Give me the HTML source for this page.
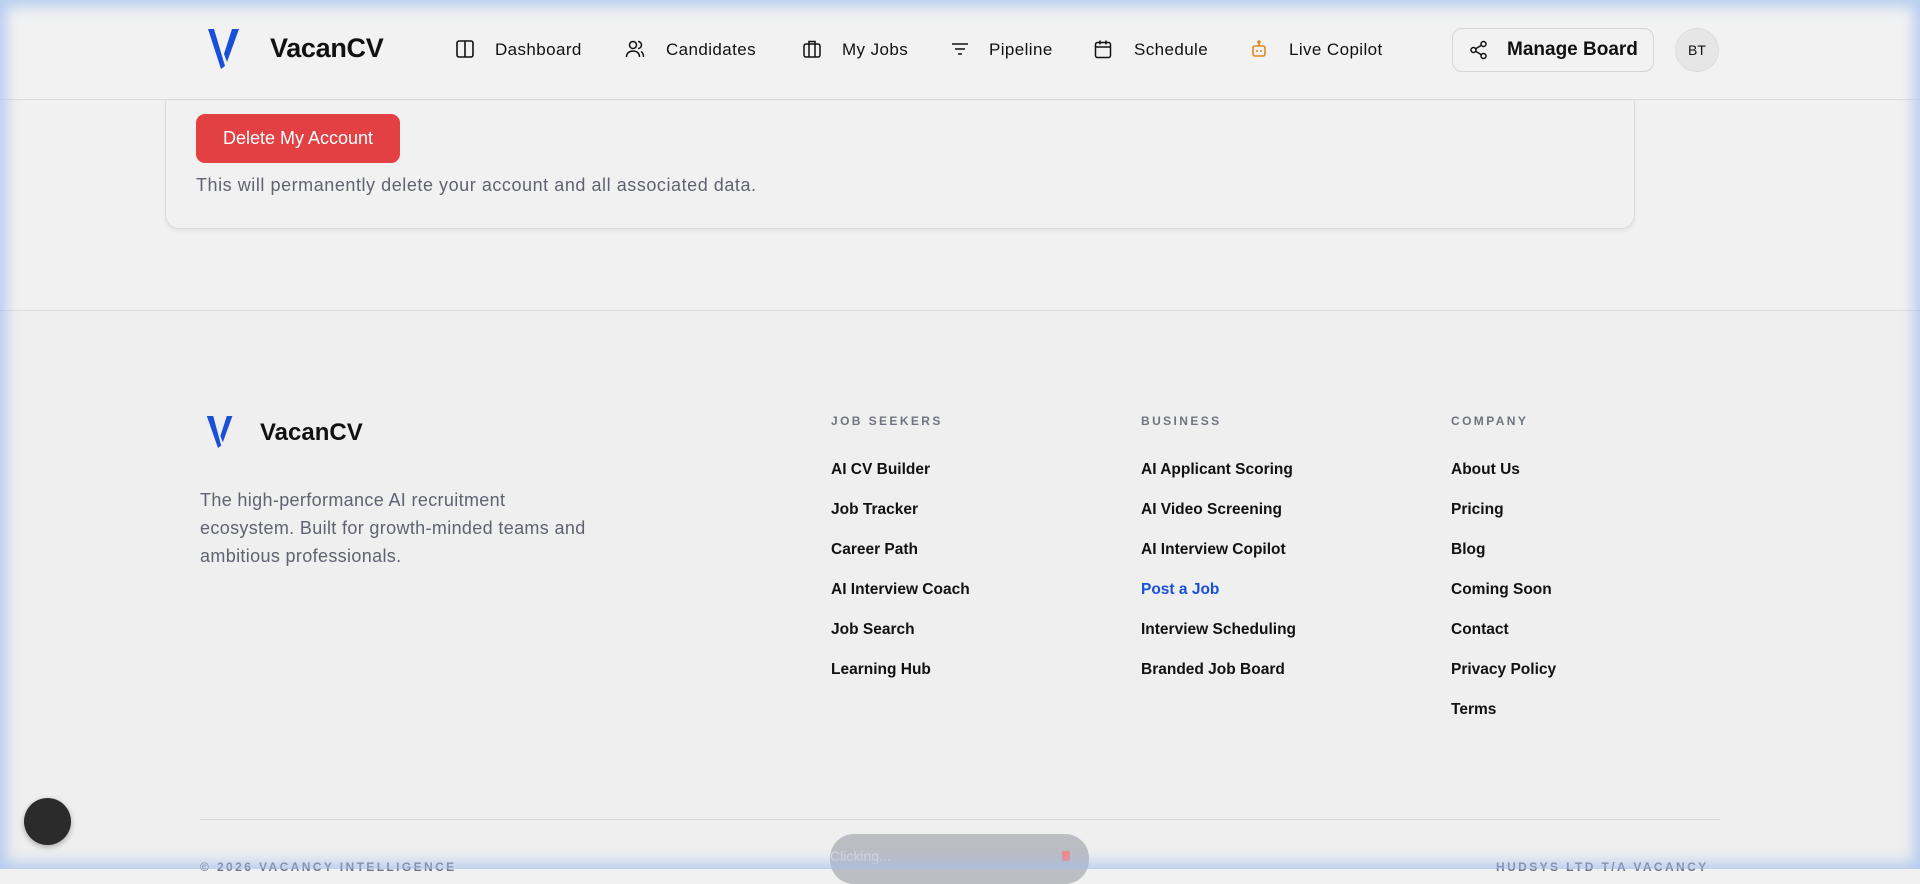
<!DOCTYPE html>
<html><head><meta charset="utf-8"><style>
*{margin:0;padding:0;box-sizing:border-box}
html,body{width:1920px;height:869px;overflow:hidden;background:#f1f1f1;font-family:"Liberation Sans",sans-serif;color:#111}
.abs{position:absolute}
.glow{position:absolute;inset:0;pointer-events:none;box-shadow:inset 0 0 14px 6px rgba(160,190,240,.75);z-index:50}
.hdr{position:absolute;left:0;top:0;width:1920px;height:100px;background:#f2f2f2;border-bottom:1px solid #dadada}
.nav{position:absolute;top:50px;transform:translateY(-50%);font-size:17px;letter-spacing:.4px;color:#111;white-space:nowrap}
.ico{position:absolute;top:39px}
.card{position:absolute;left:165px;top:100px;width:1470px;height:129px;border:1px solid #dcdcdc;border-top:none;border-radius:0 0 14px 14px;background:#f1f1f1;box-shadow:0 2px 4px rgba(0,0,0,.06)}
.del{position:absolute;left:196px;top:114px;width:204px;height:49px;background:#e34043;border-radius:9px;color:#fff;font-size:18px;line-height:49px;text-align:center}
.h{position:absolute;top:414px;font-size:12px;font-weight:bold;letter-spacing:2.4px;color:#707480}
.l{position:absolute;font-size:15.5px;font-weight:bold;color:#111;white-space:nowrap}
</style></head><body>
<div class="hdr"></div>
<svg class="abs" style="left:206px;top:28px" width="40" height="42" viewBox="0 0 40 42"><path d="M2 1 L8 1 L19 38 L15 41 Z" fill="#1a4fd8"/><path d="M26 1 L33 1 L21 34 L18 26 Z" fill="#1a4fd8"/></svg>
<div class="abs" style="left:270px;top:33px;font-size:27px;font-weight:bold;letter-spacing:-.3px">VacanCV</div>

<svg class="ico" style="left:455px" width="20" height="20" viewBox="0 0 20 20" fill="none" stroke="#111" stroke-width="1.6"><rect x="2" y="2" width="16" height="16" rx="2"/><line x1="10" y1="2" x2="10" y2="18"/></svg>
<div class="nav" style="left:495px">Dashboard</div>
<svg class="ico" style="left:625px" width="20" height="20" viewBox="0 0 20 20" fill="none" stroke="#111" stroke-width="1.5"><circle cx="8" cy="6" r="3.5"/><path d="M1.5 18c0-4 3-6 6.5-6s6.5 2 6.5 6"/><path d="M13 2.5a3.5 3.5 0 0 1 0 7M16 12.5c1.5.8 2.5 2.8 2.5 5.5"/></svg>
<div class="nav" style="left:666px">Candidates</div>
<svg class="ico" style="left:802px" width="20" height="20" viewBox="0 0 20 20" fill="none" stroke="#111" stroke-width="1.5"><rect x="2" y="5" width="16" height="13" rx="2"/><path d="M7 5V2.5h6V5M7 5v13M13 5v13"/></svg>
<div class="nav" style="left:842px">My Jobs</div>
<svg class="ico" style="left:950px" width="20" height="20" viewBox="0 0 20 20" fill="none" stroke="#111" stroke-width="1.5"><path d="M2 5h16M5 10h10M8 15h4"/></svg>
<div class="nav" style="left:989px">Pipeline</div>
<svg class="ico" style="left:1093px" width="20" height="20" viewBox="0 0 20 20" fill="none" stroke="#111" stroke-width="1.5"><rect x="2.5" y="3.5" width="15" height="15" rx="2"/><path d="M2.5 8h15M7 1.5v4M13 1.5v4"/></svg>
<div class="nav" style="left:1134px">Schedule</div>
<svg class="ico" style="left:1249px" width="20" height="20" viewBox="0 0 20 20" fill="none" stroke="#e08a1e" stroke-width="1.6"><rect x="4" y="7" width="12" height="10" rx="2"/><path d="M10 7V3.5"/><circle cx="10" cy="3" r="1"/><path d="M8 11v2M12 11v2"/></svg>
<div class="nav" style="left:1289px">Live Copilot</div>

<div class="abs" style="left:1452px;top:28px;width:202px;height:44px;border:1px solid #d6d6d6;border-radius:10px"></div>
<svg class="abs" style="left:1469px;top:40px" width="20" height="20" viewBox="0 0 20 20" fill="none" stroke="#111" stroke-width="1.5"><circle cx="14.5" cy="4" r="2.5"/><circle cx="4.5" cy="10" r="2.5"/><circle cx="14.5" cy="16" r="2.5"/><path d="M6.7 8.8l5.6-3.5M6.7 11.2l5.6 3.5"/></svg>
<div class="abs" style="left:1507px;top:39px;font-size:19px;font-weight:bold">Manage Board</div>
<div class="abs" style="left:1675px;top:28px;width:44px;height:44px;border-radius:50%;background:#e6e6e6;border:1px solid #dcdcdc;font-size:14px;line-height:42px;text-align:center">BT</div>

<div class="card"></div>
<div class="del">Delete My Account</div>
<div class="abs" style="left:196px;top:175px;font-size:18px;letter-spacing:.55px;color:#60636f;white-space:nowrap">This will permanently delete your account and all associated data.</div>

<div class="abs" style="left:0;top:310px;width:1920px;height:1px;background:#dadada"></div>
<div class="abs" style="left:0;top:311px;width:1920px;height:558px;background:#efefef"></div>

<svg class="abs" style="left:206px;top:414px" width="32" height="36" viewBox="0 0 40 42"><path d="M1 1 L9 1 L19 38 L15 41 Z" fill="#1a4fd8"/><path d="M26 1 L33 1 L21 34 L18 26 Z" fill="#1a4fd8"/></svg>
<div class="abs" style="left:260px;top:419px;font-size:24px;font-weight:bold">VacanCV</div>
<div class="abs" style="left:200px;top:486px;width:395px;font-size:18px;letter-spacing:.35px;line-height:28px;color:#5f6270">The high-performance AI recruitment ecosystem. Built for growth-minded teams and ambitious professionals.</div>

<div class="h" style="left:831px">JOB SEEKERS</div>
<div class="h" style="left:1141px">BUSINESS</div>
<div class="h" style="left:1451px">COMPANY</div>

<div class="l" style="left:831px;top:461px">AI CV Builder</div>
<div class="l" style="left:831px;top:501px">Job Tracker</div>
<div class="l" style="left:831px;top:541px">Career Path</div>
<div class="l" style="left:831px;top:581px">AI Interview Coach</div>
<div class="l" style="left:831px;top:621px">Job Search</div>
<div class="l" style="left:831px;top:661px">Learning Hub</div>

<div class="l" style="left:1141px;top:461px">AI Applicant Scoring</div>
<div class="l" style="left:1141px;top:501px">AI Video Screening</div>
<div class="l" style="left:1141px;top:541px">AI Interview Copilot</div>
<div class="l" style="left:1141px;top:581px;color:#1a4fd8">Post a Job</div>
<div class="l" style="left:1141px;top:621px">Interview Scheduling</div>
<div class="l" style="left:1141px;top:661px">Branded Job Board</div>

<div class="l" style="left:1451px;top:461px">About Us</div>
<div class="l" style="left:1451px;top:501px">Pricing</div>
<div class="l" style="left:1451px;top:541px">Blog</div>
<div class="l" style="left:1451px;top:581px">Coming Soon</div>
<div class="l" style="left:1451px;top:621px">Contact</div>
<div class="l" style="left:1451px;top:661px">Privacy Policy</div>
<div class="l" style="left:1451px;top:701px">Terms</div>

<div class="abs" style="left:200px;top:819px;width:1520px;height:1px;background:#d8d8d8"></div>
<div class="abs" style="left:200px;top:860px;font-size:12px;font-weight:bold;letter-spacing:2.4px;color:#707480">© 2026 VACANCY INTELLIGENCE</div>
<div class="abs" style="left:1496px;top:860px;font-size:12px;font-weight:bold;letter-spacing:2.4px;color:#707480">HUDSYS LTD T/A VACANCY</div>

<div class="abs" style="left:24px;top:798px;width:47px;height:47px;border-radius:50%;background:#2b2b2b;box-shadow:0 2px 6px rgba(0,0,0,.3)"></div>
<div class="abs" style="left:830px;top:834px;width:259px;height:50px;border-radius:24px;background:rgba(170,172,180,.75);color:#d8d8dc;font-size:14px;padding:14px 0 0 0">Clicking...<span style="position:absolute;left:232px;top:17px;width:8px;height:10px;background:#e88;border-radius:2px"></span></div>
<div class="glow"></div>
</body></html>
